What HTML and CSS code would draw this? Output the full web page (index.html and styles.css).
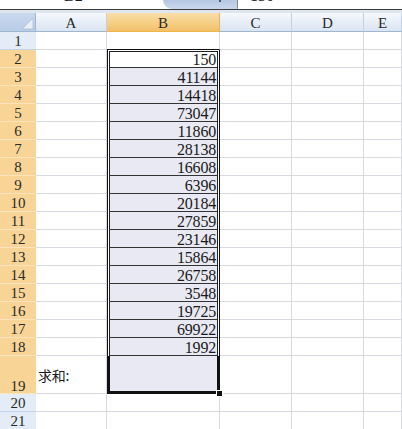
FILE: index.html
```html
<!DOCTYPE html>
<html lang="zh-CN">
<head>
<meta charset="utf-8">
<title>求和</title>
<link rel="stylesheet" href="styles.css">
</head>
<body>
<div class="window">
  <div class="fbar">
    <div class="namebox"><span class="fb-text">B2</span></div>
    <div class="splitter"><span class="grip"></span></div>
    <div class="formula"><span class="fb-text">150</span></div>
  </div>
  <div class="band"></div>

  <div class="grid">
    <!-- header row -->
    <div class="corner">
      <svg width="36" height="19" viewBox="0 0 36 19"><polygon points="33,5 33,16 22,16" fill="#e9eff7"/><polygon points="33,5 33,16 22,16" fill="none" stroke="#9fb4cf" stroke-width="0.6"/></svg>
    </div>
    <div class="ch">A</div>
    <div class="ch sel">B</div>
    <div class="ch">C</div>
    <div class="ch">D</div>
    <div class="ch">E</div>

    <!-- row 1 -->
    <div class="rh">1</div>
    <div class="c"></div><div class="c b-top"></div><div class="c"></div><div class="c"></div><div class="c"></div>

    <!-- rows 2–18: values in B -->
    <div class="rh sel">2</div><div class="c"></div>
    <div class="bv first active"><span class="in">150</span></div>
    <div class="c"></div><div class="c"></div><div class="c"></div>

    <div class="rh sel">3</div><div class="c"></div>
    <div class="bv"><span class="in">41144</span></div>
    <div class="c"></div><div class="c"></div><div class="c"></div>

    <div class="rh sel">4</div><div class="c"></div>
    <div class="bv"><span class="in">14418</span></div>
    <div class="c"></div><div class="c"></div><div class="c"></div>

    <div class="rh sel">5</div><div class="c"></div>
    <div class="bv"><span class="in">73047</span></div>
    <div class="c"></div><div class="c"></div><div class="c"></div>

    <div class="rh sel">6</div><div class="c"></div>
    <div class="bv"><span class="in">11860</span></div>
    <div class="c"></div><div class="c"></div><div class="c"></div>

    <div class="rh sel">7</div><div class="c"></div>
    <div class="bv"><span class="in">28138</span></div>
    <div class="c"></div><div class="c"></div><div class="c"></div>

    <div class="rh sel">8</div><div class="c"></div>
    <div class="bv"><span class="in">16608</span></div>
    <div class="c"></div><div class="c"></div><div class="c"></div>

    <div class="rh sel">9</div><div class="c"></div>
    <div class="bv"><span class="in">6396</span></div>
    <div class="c"></div><div class="c"></div><div class="c"></div>

    <div class="rh sel">10</div><div class="c"></div>
    <div class="bv"><span class="in">20184</span></div>
    <div class="c"></div><div class="c"></div><div class="c"></div>

    <div class="rh sel">11</div><div class="c"></div>
    <div class="bv"><span class="in">27859</span></div>
    <div class="c"></div><div class="c"></div><div class="c"></div>

    <div class="rh sel">12</div><div class="c"></div>
    <div class="bv"><span class="in">23146</span></div>
    <div class="c"></div><div class="c"></div><div class="c"></div>

    <div class="rh sel">13</div><div class="c"></div>
    <div class="bv"><span class="in">15864</span></div>
    <div class="c"></div><div class="c"></div><div class="c"></div>

    <div class="rh sel">14</div><div class="c"></div>
    <div class="bv"><span class="in">26758</span></div>
    <div class="c"></div><div class="c"></div><div class="c"></div>

    <div class="rh sel">15</div><div class="c"></div>
    <div class="bv"><span class="in">3548</span></div>
    <div class="c"></div><div class="c"></div><div class="c"></div>

    <div class="rh sel">16</div><div class="c"></div>
    <div class="bv"><span class="in">19725</span></div>
    <div class="c"></div><div class="c"></div><div class="c"></div>

    <div class="rh sel">17</div><div class="c"></div>
    <div class="bv"><span class="in">69922</span></div>
    <div class="c"></div><div class="c"></div><div class="c"></div>

    <div class="rh sel">18</div><div class="c"></div>
    <div class="bv"><span class="in">1992</span></div>
    <div class="c"></div><div class="c"></div><div class="c"></div>

    <!-- row 19: total -->
    <div class="rh sel tall">19</div>
    <div class="c label">求和:</div>
    <div class="bsum"><span class="handle"></span></div>
    <div class="c"></div><div class="c"></div><div class="c"></div>

    <!-- rows 20–21 -->
    <div class="rh">20</div>
    <div class="c"></div><div class="c"></div><div class="c"></div><div class="c"></div><div class="c"></div>
    <div class="rh">21</div>
    <div class="c"></div><div class="c"></div><div class="c"></div><div class="c"></div><div class="c"></div>
  </div>
</div>
</body>
</html>
```

FILE: styles.css
```css
* { box-sizing: border-box; }

html, body {
  margin: 0;
  padding: 0;
  background: #fff;
}

.window {
  width: 402px;
  height: 429px;
  overflow: hidden;
  font-family: "Liberation Serif", "DejaVu Serif", serif;
  color: #1a1a1a;
}

/* formula bar, only its lower edge is in view */
.fbar {
  display: flex;
  height: 10px;
  border-bottom: 1px solid #3c3c3c;
  overflow: hidden;
  background: #fff;
}

.namebox {
  width: 163px;
  padding-left: 64px;
}

.fb-text {
  display: block;
  font-size: 16px;
  line-height: 14px;
  margin-top: -11px;
}

.splitter {
  width: 75px;
  height: 9px;
  background: linear-gradient(#b4c7e2, #c9d7ea);
  border-bottom-left-radius: 9px;
  border-bottom-right-radius: 1px;
  border-right: 1px solid #7f8a99;
  display: flex;
  justify-content: flex-end;
  align-items: flex-start;
  padding-right: 16px;
}

.grip {
  width: 2px;
  height: 2px;
  background: #4a5a70;
}

.formula {
  flex: 1;
  padding-left: 12px;
}

.band {
  height: 3px;
  background: #dfe6ef;
}

/* worksheet grid */
.grid {
  display: grid;
  grid-template-columns: 36px 71px 113px 72px 72px 1fr;
  grid-template-rows: 19px repeat(18, 18px) 38px 18px 18px;
}

.corner {
  background: linear-gradient(#c9d9ee, #b9cde7);
  border-right: 1px solid #9eb6ce;
  border-bottom: 1px solid #9eb6ce;
}

.corner svg { display: block; }

.ch {
  display: flex;
  align-items: center;
  justify-content: center;
  padding-top: 2px;
  font-size: 15px;
  color: #2a2a2a;
  background: linear-gradient(#f6f9fd, #e6edf7 55%, #dbe5f2);
  border-right: 1px solid #c2d1e3;
  border-bottom: 1px solid #9eb6ce;
}

.ch.sel {
  background: linear-gradient(#f9dea9, #f6cf85 55%, #f1c06a);
  border-right-color: #e2b35e;
  border-bottom-color: #f0b549;
}

.rh {
  display: flex;
  align-items: center;
  justify-content: center;
  padding-top: 1px;
  font-size: 15px;
  color: #2a2a2a;
  background: #e4ecf7;
  border-bottom: 1px solid #c5d3e6;
}

.rh.sel {
  background: #f8d597;
  border-bottom: 1px solid #fbe4bb;
}

.rh.tall {
  align-items: flex-end;
  line-height: 13px;
  padding-bottom: 0;
}

.c {
  border-right: 1px solid #d7dbe1;
  border-bottom: 1px solid #d7dbe1;
}

.c.b-top {
  border-bottom-color: #111;
}

.c.label {
  display: flex;
  align-items: center;
  padding-left: 2px;
  font-family: "Noto Sans CJK SC", sans-serif;
  font-size: 14px;
  letter-spacing: -0.3px;
}

/* B2:B18, bordered values inside the selected range */
.bv {
  border-left: 1px solid #111;
  border-right: 1px solid #111;
  background: #fff;
  padding: 0 1px;
}

.bv.first {
  padding-top: 1px;
}

.bv .in {
  height: 100%;
  display: flex;
  align-items: flex-end;
  justify-content: flex-end;
  padding-right: 1px;
  font-size: 16px;
  line-height: 15px;
  letter-spacing: -0.2px;
  background: #e8e9f2;
  border-left: 1px solid #222;
  border-right: 1px solid #222;
  border-bottom: 1px solid #333;
}

.bv.first .in {
  border-top: 1px solid #222;
}

.bv.active .in {
  background: #fff;
}

/* B19, bottom of the selection with the fill handle */
.bsum {
  position: relative;
  background: #e8e9f2;
  border-left: 3px solid #111;
  border-right: 3px solid #111;
  border-bottom: 3px solid #111;
}

.handle {
  position: absolute;
  right: -6px;
  bottom: -6px;
  width: 7px;
  height: 7px;
  background: #111;
  border: 1px solid #fff;
}
```
